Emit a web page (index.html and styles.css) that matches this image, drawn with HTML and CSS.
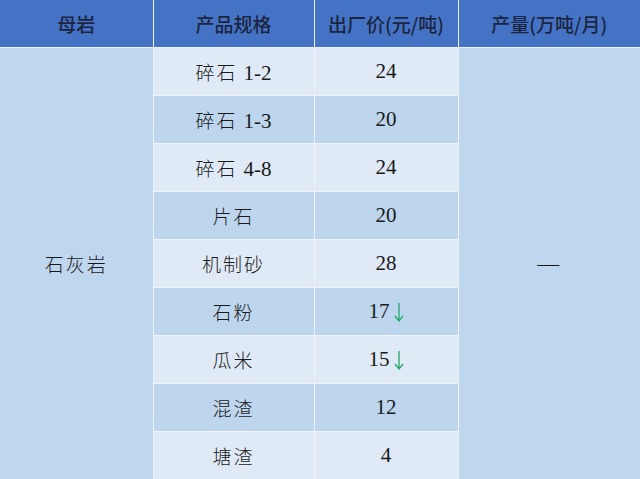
FILE: index.html
```html
<!DOCTYPE html>
<html lang="zh">
<head>
<meta charset="utf-8">
<link rel="stylesheet" href="styles.css">
</head>
<body>
<table class="grid">
  <colgroup>
    <col class="c1"><col class="c2"><col class="c3"><col class="c4">
  </colgroup>
  <thead>
    <tr class="head">
      <th>母岩</th><th>产品规格</th><th>出厂价(元/吨)</th><th>产量(万吨/月)</th>
    </tr>
  </thead>
  <tbody>
    <tr class="light">
      <td class="merged" rowspan="9">石灰岩</td>
      <td class="cn">碎石 <span class="num">1-2</span></td><td class="num">24</td>
      <td class="merged" rowspan="9"><span class="dash">—</span></td>
    </tr>
    <tr class="dark"><td class="cn">碎石 <span class="num">1-3</span></td><td class="num">20</td></tr>
    <tr class="light"><td class="cn">碎石 <span class="num">4-8</span></td><td class="num">24</td></tr>
    <tr class="dark"><td class="cn">片石</td><td class="num">20</td></tr>
    <tr class="light"><td class="cn">机制砂</td><td class="num">28</td></tr>
    <tr class="dark"><td class="cn">石粉</td><td class="num">17<svg class="down" viewBox="0 0 10 20" width="10" height="20"><path d="M5 1 V18.5 M1 14 L5 19 L9 14" fill="none" stroke="#22a86a" stroke-width="1.3"/></svg></td></tr>
    <tr class="light"><td class="cn">瓜米</td><td class="num">15<svg class="down" viewBox="0 0 10 20" width="10" height="20"><path d="M5 1 V18.5 M1 14 L5 19 L9 14" fill="none" stroke="#22a86a" stroke-width="1.3"/></svg></td></tr>
    <tr class="dark"><td class="cn">混渣</td><td class="num">12</td></tr>
    <tr class="light"><td class="cn">塘渣</td><td class="num">4</td></tr>
  </tbody>
</table>
</body>
</html>
```
FILE: styles.css
```css
html, body {
  margin: 0;
  padding: 0;
  background: #ffffff;
}
.grid {
  width: 640px;
  border-collapse: collapse;
  table-layout: fixed;
  font-family: "Liberation Serif", "Noto Sans CJK SC", serif;
  color: #1a1a1a;
}
.c1 { width: 153px; }
.c2 { width: 161px; }
.c3 { width: 144px; }
.c4 { width: 182px; }
.grid th, .grid td {
  border: 1px solid #eef3fa;
  text-align: center;
  vertical-align: middle;
  padding: 0;
  height: 47px;
}
.grid tr > :first-child { border-left: none; }
.grid tr > :last-child { border-right: none; }
.head th {
  border-top: none;
  background: #4472c4;
  font-family: "Noto Sans CJK SC", sans-serif;
  font-weight: 500;
  font-size: 19px;
  color: #1c2540;
}
.light td { background: #dfeaf6; }
.dark td { background: #bdd6ee; }
.grid td.merged {
  background: #bed6ee;
  font-family: "Noto Sans CJK SC", sans-serif;
  font-weight: 300;
  font-size: 19px;
  letter-spacing: 2px;
}
.cn {
  font-family: "Noto Sans CJK SC", sans-serif;
  font-weight: 300;
  font-size: 19px;
  letter-spacing: 2px;
}
.num {
  font-family: "Liberation Serif", serif;
  font-size: 21px;
  letter-spacing: 0;
}
.down {
  display: inline-block;
  vertical-align: -4px;
  margin-left: 4px;
}
.dash {
  font-family: "Liberation Serif", serif;
  font-size: 22px;
}
.grid tbody tr:last-child td { border-bottom: none; }
```
